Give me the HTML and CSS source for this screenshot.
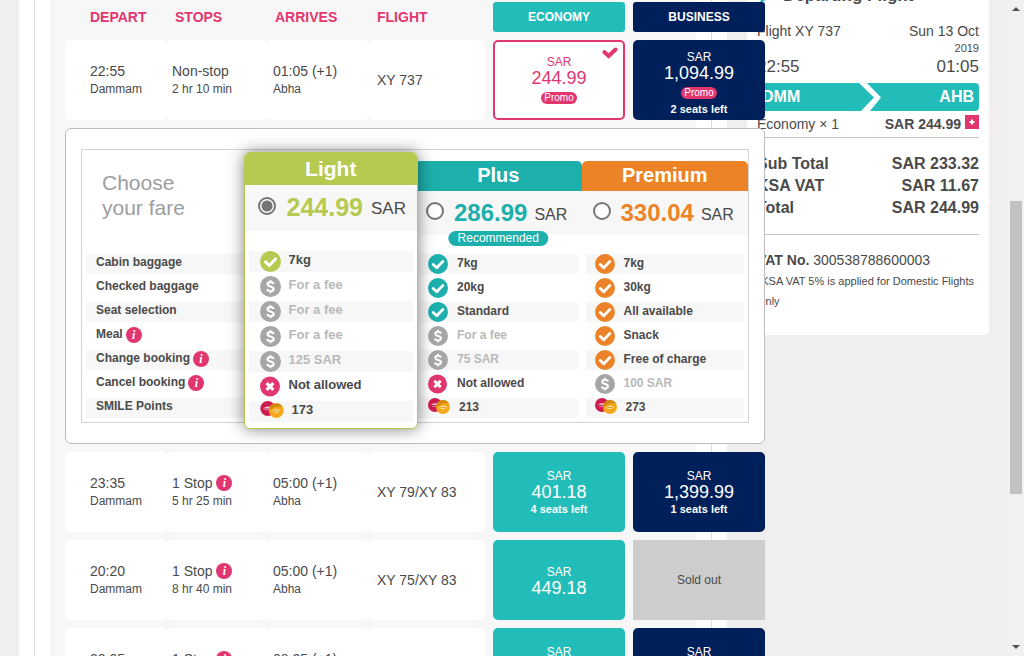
FILE: index.html
```html
<!DOCTYPE html>
<html lang="en">
<head>
<meta charset="utf-8">
<title>Select your flight</title>
<link rel="stylesheet" href="styles.css">
</head>
<body>
<svg class="sprite" aria-hidden="true">
  <symbol id="check" viewBox="0 0 20 20"><circle cx="10" cy="10" r="10" fill="currentColor"/><path d="M5.2 10.4 8.8 13.8 14.9 7.4" fill="none" stroke="#fff" stroke-width="2.8" stroke-linecap="round" stroke-linejoin="round"/></symbol>
  <symbol id="cross" viewBox="0 0 20 20"><circle cx="9.5" cy="10" r="9.5" fill="#e2366f"/><path d="M6.3 6.8 12.7 13.2M12.7 6.8 6.3 13.2" fill="none" stroke="#fff" stroke-width="3"/></symbol>
  <symbol id="fee" viewBox="0 0 20 20"><circle cx="10" cy="10" r="10" fill="#a6a6a6"/><path d="M13 7.600C12.600 6.200 11.400 5.800 10 5.800 8.300 5.800 7.200 6.500 7.200 7.800 7.200 10.500 13 9.500 13 12.300 13 13.700 11.700 14.400 10 14.400 8.400 14.400 7.200 13.800 6.800 12.400" fill="none" stroke="#fff" stroke-width="2"/><path d="M10 3.800V6M10 14V16.400" stroke="#fff" stroke-width="1.600"/></symbol>
  <symbol id="smile" viewBox="0 0 22 16"><circle cx="7" cy="7" r="7" fill="#cf1b50"/><path d="M2.500 7.500Q6 3.500 11 6.500Q7 10.500 2.500 7.500" fill="#f7c9d5"/><path d="M3 7.500Q6 7.800 10 7" stroke="#b0123f" fill="none"/><circle cx="15" cy="9" r="7" fill="#f5a81c"/><path d="M9 5.500A7 7 0 0 1 21 5.500Q14 4 9 9Z" fill="#d08a0c"/><path d="M11 9.500Q15 6.500 19 8.500Q15.500 13 11 9.500" fill="#fff0c8"/><path d="M12 9.700Q15 9.900 18 9" stroke="#e09a10" fill="none"/></symbol>
</svg>

<div class="page">
  <main class="main">
    <div class="frame">
      <div class="results">
        <section class="flights">
          <div class="row row--head">
            <span class="head head--depart">DEPART</span>
            <span class="head head--stops">STOPS</span>
            <span class="head head--arrives">ARRIVES</span>
            <span class="head head--flight">FLIGHT</span>
            <span class="cabin cabin--economy">ECONOMY</span>
            <span class="cabin cabin--business">BUSINESS</span>
          </div>

          <div class="row">
            <div class="cell cell--first"><span>22:55</span><small>Dammam</small></div>
            <div class="cell"><span>Non-stop</span><small>2 hr 10 min</small></div>
            <div class="cell"><span>01:05 (+1)</span><small>Abha</small></div>
            <div class="cell cell--flight"><span>XY 737</span></div>
            <button class="price price--selected" type="button">
              <svg class="price__tick" viewBox="0 0 16 12"><path d="M2.500 5.200 6.700 9 13.500 2.500" fill="none" stroke="currentColor" stroke-width="4" stroke-linecap="round"/></svg>
              <span class="price__cur">SAR</span><span class="price__sum">244.99</span><span class="promo">Promo</span>
            </button>
            <button class="price price--business price--full" type="button"><span class="price__cur">SAR</span><span class="price__sum">1,094.99</span><span class="promo">Promo</span><b class="price__left">2 seats left</b></button>
          </div>

          <div class="fares">
            <div class="fares__box">
              <div class="labels">
                <h2 class="labels__title">Choose<br>your fare</h2>
                <ul class="features">
                  <li>Cabin baggage</li>
                  <li>Checked baggage</li>
                  <li>Seat selection</li>
                  <li>Meal <i class="info">i</i></li>
                  <li>Change booking <i class="info">i</i></li>
                  <li>Cancel booking <i class="info">i</i></li>
                  <li>SMILE Points</li>
                </ul>
              </div>

              <div class="fare fare--light">
                <h3 class="fare__name">Light</h3>
                <label class="fare__price"><input type="radio" name="fare" checked><b>244.99</b><span>SAR</span></label>
                <ul class="features">
                  <li><svg class="ico"><use href="#check"/></svg>7kg</li>
                  <li class="paid"><svg class="ico"><use href="#fee"/></svg>For a fee</li>
                  <li class="paid"><svg class="ico"><use href="#fee"/></svg>For a fee</li>
                  <li class="paid"><svg class="ico"><use href="#fee"/></svg>For a fee</li>
                  <li class="paid"><svg class="ico"><use href="#fee"/></svg>125 SAR</li>
                  <li><svg class="ico"><use href="#cross"/></svg>Not allowed</li>
                  <li><svg class="ico ico--smile"><use href="#smile"/></svg>173</li>
                </ul>
              </div>

              <div class="fare fare--plus">
                <h3 class="fare__name">Plus</h3>
                <label class="fare__price"><input type="radio" name="fare"><b>286.99</b><span>SAR</span></label>
                <span class="recommended">Recommended</span>
                <ul class="features">
                  <li><svg class="ico"><use href="#check"/></svg>7kg</li>
                  <li><svg class="ico"><use href="#check"/></svg>20kg</li>
                  <li><svg class="ico"><use href="#check"/></svg>Standard</li>
                  <li class="paid"><svg class="ico"><use href="#fee"/></svg>For a fee</li>
                  <li class="paid"><svg class="ico"><use href="#fee"/></svg>75 SAR</li>
                  <li><svg class="ico"><use href="#cross"/></svg>Not allowed</li>
                  <li><svg class="ico ico--smile"><use href="#smile"/></svg>213</li>
                </ul>
              </div>

              <div class="fare fare--premium">
                <h3 class="fare__name">Premium</h3>
                <label class="fare__price"><input type="radio" name="fare"><b>330.04</b><span>SAR</span></label>
                <ul class="features">
                  <li><svg class="ico"><use href="#check"/></svg>7kg</li>
                  <li><svg class="ico"><use href="#check"/></svg>30kg</li>
                  <li><svg class="ico"><use href="#check"/></svg>All available</li>
                  <li><svg class="ico"><use href="#check"/></svg>Snack</li>
                  <li><svg class="ico"><use href="#check"/></svg>Free of charge</li>
                  <li class="paid"><svg class="ico"><use href="#fee"/></svg>100 SAR</li>
                  <li><svg class="ico ico--smile"><use href="#smile"/></svg>273</li>
                </ul>
              </div>
            </div>
          </div>

          <div class="row">
            <div class="cell cell--first"><span>23:35</span><small>Dammam</small></div>
            <div class="cell"><span>1 Stop <i class="info">i</i></span><small>5 hr 25 min</small></div>
            <div class="cell"><span>05:00 (+1)</span><small>Abha</small></div>
            <div class="cell cell--flight"><span>XY 79/XY 83</span></div>
            <button class="price" type="button"><span class="price__cur">SAR</span><span class="price__sum">401.18</span><b class="price__left">4 seats left</b></button>
            <button class="price price--business" type="button"><span class="price__cur">SAR</span><span class="price__sum">1,399.99</span><b class="price__left">1 seats left</b></button>
          </div>

          <div class="row">
            <div class="cell cell--first"><span>20:20</span><small>Dammam</small></div>
            <div class="cell"><span>1 Stop <i class="info">i</i></span><small>8 hr 40 min</small></div>
            <div class="cell"><span>05:00 (+1)</span><small>Abha</small></div>
            <div class="cell cell--flight"><span>XY 75/XY 83</span></div>
            <button class="price" type="button"><span class="price__cur">SAR</span><span class="price__sum">449.18</span></button>
            <div class="price price--sold">Sold out</div>
          </div>

          <div class="row">
            <div class="cell cell--first"><span>20:05</span><small>Dammam</small></div>
            <div class="cell"><span>1 Stop <i class="info">i</i></span><small>12 hr 20 min</small></div>
            <div class="cell"><span>08:25 (+1)</span><small>Abha</small></div>
            <div class="cell cell--flight"><span>XY 87/XY 85</span></div>
            <button class="price" type="button"><span class="price__cur">SAR</span><span class="price__sum">449.18</span><b class="price__left">4 seats left</b></button>
            <button class="price price--business" type="button"><span class="price__cur">SAR</span><span class="price__sum">1,399.99</span><b class="price__left">1 seats left</b></button>
          </div>
        </section>
      </div>
    </div>
  </main>

  <aside class="summary">
    <h2 class="summary__title"><svg class="summary__plane" viewBox="0 0 20 20"><path d="M1 8 8 9 14 3 17 3 11 11 5 17 3 16 5 12Z" fill="currentColor"/></svg>Departing Flight</h2>
    <div class="line"><span>Flight XY 737</span><span>Sun 13 Oct</span></div>
    <div class="year">2019</div>
    <div class="line line--times"><span>22:55</span><span>01:05</span></div>
    <div class="route"><span>DMM</span><svg class="route__arrow" viewBox="0 0 24 28"><path d="M0 0H8L22 14.500 11 28H2L15 14.500Z" fill="#fff"/></svg><span>AHB</span></div>
    <div class="line line--fare"><span>Economy × 1</span><span class="line__end"><b>SAR 244.99</b><button class="more" type="button" aria-label="Show fare details"><svg viewBox="0 0 14 14"><path d="M7 4.500V9.500M4.500 7H9.500" stroke="#fff" stroke-width="2"/></svg></button></span></div>
    <div class="totals">
      <div class="line"><span>Sub Total</span><span>SAR 233.32</span></div>
      <div class="line"><span>KSA VAT</span><span>SAR 11.67</span></div>
      <div class="line"><span>Total</span><span>SAR 244.99</span></div>
    </div>
    <p class="vat"><b>VAT No.</b> 300538788600003</p>
    <p class="note">*KSA VAT 5% is applied for Domestic Flights Only</p>
  </aside>

  <div class="scrollbar" aria-hidden="true">
    <svg class="scrollbar__arrow" viewBox="0 0 8 4"><path d="M0 4 4 0 8 4Z" fill="#505050"/></svg>
    <div class="scrollbar__track"><div class="scrollbar__thumb"></div></div>
    <svg class="scrollbar__arrow" viewBox="0 0 8 4"><path d="M0 0 4 4 8 0Z" fill="#505050"/></svg>
  </div>
</div>
</body>
</html>
```

FILE: styles.css
```css
* { box-sizing: border-box; }

body {
  margin: 0;
  height: 100vh;
  overflow: hidden;
  background: #f0eeef;
  color: #4a4a4a;
  font: 14px/18px "Liberation Sans", Arial, sans-serif;
}

button { font: inherit; color: inherit; border: 0; padding: 0; cursor: pointer; }
ul { list-style: none; margin: 0; padding: 0; }
h2, h3, p { margin: 0; }
.sprite { display: none; }

.page {
  display: flex;
  align-items: flex-start;
  height: 100vh;
  padding-left: 19px;
  overflow: hidden;
}

/* flight list */
.main { flex: 1; background: #fff; padding: 0 15px; }
.frame { border: solid #dcdcdc; border-width: 0 1px; padding: 0 15px; }
.results { background: #f7f7f7; padding: 2px 15px 0; }

.flights {
  position: relative;
  z-index: 1;
  margin-right: -84px;
  display: grid;
  gap: 8px;
}

.row {
  display: grid;
  grid-template-columns: 101fr 101fr 102fr 116fr 140fr 140fr;
  min-height: 80px;
}
.row--head { min-height: 30px; align-items: center; }

.head { color: #e2366f; font-weight: bold; }
.head--depart { padding-left: 25px; }
.head--stops { padding-left: 9px; }
.head--arrives { padding-left: 8px; }
.head--flight { padding-left: 8px; }

.cabin {
  margin-left: 8px;
  border-radius: 3px;
  color: #fff;
  font-size: 12px;
  font-weight: bold;
  line-height: 30px;
  text-align: center;
}
.cabin--economy { background: #23bdb9; }
.cabin--business { background: #00205b; }

.cell {
  display: flex;
  flex-direction: column;
  justify-content: center;
  padding-left: 6px;
  border-radius: 5px;
  background: #fff;
}
.cell--first { padding-left: 25px; }
.cell--flight { padding-left: 8px; }
.cell span { display: flex; align-items: center; gap: 4px; }
.cell small { font-size: 12px; }

.info {
  display: inline-block;
  width: 16px;
  height: 16px;
  border-radius: 50%;
  background: #e2366f;
  color: #fff;
  font: italic bold 12px/16px "Liberation Serif", serif;
  text-align: center;
}

.price {
  position: relative;
  display: flex;
  flex-direction: column;
  align-items: center;
  justify-content: center;
  margin-left: 8px;
  border-radius: 5px;
  background: #23bdb9;
  color: #fff;
}
.price--business { background: #00205b; }
.price--full { padding-top: 6px; }
.price--selected { background: #fff; border: 2px solid #e2366f; color: #e2366f; }
.price--sold { background: #cdcdcd; color: #4a4a4a; border-radius: 0; font-size: 12px; }
.price__cur { font-size: 12px; line-height: 16px; }
.price__sum { font-size: 18px; line-height: 17px; }
.price__left { font-size: 11px; line-height: 16px; }
.price__tick { position: absolute; top: 5px; right: 5px; width: 16px; height: 12px; }

.promo {
  margin: 5px 0 2px;
  padding: 0 3px;
  border-radius: 6px;
  background: #e2366f;
  color: #fff;
  font-size: 10px;
  line-height: 12px;
}

/* fare chooser */
.fares {
  padding: 20px 15px;
  border: 1px solid #bdbdbd;
  border-radius: 6px;
  background: #fff;
}
.fares__box {
  display: grid;
  grid-template-columns: repeat(4, 1fr);
  border: 1px solid #d2d2d2;
}

.labels__title {
  height: 104px;
  padding: 20px 20px 0;
  color: #9d9d9d;
  font-size: 21px;
  font-weight: normal;
  line-height: 25px;
}

.features { display: grid; gap: 4px; padding: 0 4px 4px; font-size: 12px; font-weight: bold; }
.features li { display: flex; align-items: flex-start; height: 20px; line-height: 18px; }
.features li:nth-child(odd) { background: #f7f7f7; }
.labels .features { padding-right: 0; }
.labels .features li { align-items: center; gap: 3px; padding: 0 0 4px 10px; }
.labels .info { margin-top: 2px; }
.paid { color: #b9b9b9; }

.fare { padding-top: 11px; }
.fare .features li { gap: 9px; padding-left: 9px; }
.ico { flex: none; width: 20px; height: 20px; }
.ico--smile { width: 22px; height: 16px; }

.fare__name {
  border-radius: 5px 5px 0 0;
  background: var(--tone);
  color: #fff;
  font-size: 20px;
  line-height: 29px;
  height: 30px;
  text-align: center;
}
.fare__price {
  display: flex;
  align-items: center;
  height: 44px;
  padding-left: 11px;
  background: #f7f7f7;
  font-size: 16px;
}
.fare__price b { color: var(--tone); font-size: 24px; margin: 0 7px 0 10px; }
.fare__price span { padding-top: 4px; }
.fare__price input {
  appearance: none;
  width: 18px;
  height: 18px;
  margin: 0 0 4px;
  border: 2px solid #757575;
  border-radius: 50%;
  background: #fff;
}
.fare__price input:checked { background: radial-gradient(circle, #757575 5px, #fff 6px); }
.fare .features { margin-top: 19px; }
.fare .ico { color: var(--tone); }

.fare--plus { --tone: #1dafac; position: relative; }
.fare--premium { --tone: #ec8427; }
.fare--light {
  --tone: #b6ca51;
  position: relative;
  z-index: 2;
  margin: 2px -3px -7px -5px;
  padding: 0;
  border: 1px solid var(--tone);
  border-radius: 6px;
  background: #fff;
  box-shadow: 0 0 16px rgba(0, 0, 0, .5);
}
.fare--light .fare__name { height: 32px; font-size: 21px; line-height: 32px; }
.fare--light .fare__price { height: 46px; padding: 0 0 2px 13px; font-size: 17px; }
.fare--light .fare__price b { font-size: 25px; margin: 0 8px 0 11px; }
.fare--light .fare__price input { margin-bottom: 2px; }
.fare--light .features { margin-top: 20px; font-size: 13px; }
.fare--light .features li { height: 21px; padding-left: 11px; gap: 8px; }
.fare--light .ico { width: 21px; height: 21px; }
.fare--light .ico--smile { width: 24px; height: 17px; }

.recommended {
  position: absolute;
  top: 81px;
  left: 50%;
  transform: translateX(-50%);
  padding: 0 9px;
  border-radius: 8px;
  background: var(--tone);
  color: #fff;
  font-size: 12px;
  line-height: 15px;
}

/* booking summary */
.summary {
  flex: 0 0 242px;
  margin: 0 19px 0 20px;
  padding: 0 10px 24px;
  border-radius: 0 0 4px 4px;
  background: #fff;
  line-height: 20px;
}
.summary__title { display: flex; gap: 6px; margin-top: -14px; padding-bottom: 15px; font-size: 17px; line-height: 20px; }
.summary__plane { width: 20px; height: 20px; color: #23bdb9; }
.line { display: flex; justify-content: space-between; }
.line__end { display: flex; align-items: center; gap: 4px; }
.year { font-size: 11px; line-height: 14px; text-align: right; }
.line--times { font-size: 17px; line-height: 24px; }
.route {
  display: flex;
  align-items: center;
  margin: 4px 0 3px;
  height: 28px;
  padding: 0 5px;
  border-radius: 4px;
  background: #23bdb9;
  color: #fff;
  font-size: 16px;
  font-weight: bold;
}
.route__arrow { width: 24px; height: 28px; margin: 0 auto 0 59px; }
.line--fare { padding-bottom: 3px; border-bottom: 1px solid #c4c4c4; }
.more { width: 14px; height: 14px; margin-bottom: 4px; background: #e2366f; }
.more svg { display: block; }
.totals { padding: 15px 0; border-bottom: 1px solid #c4c4c4; font-size: 16px; font-weight: bold; line-height: 22px; }
.vat { margin-top: 15px; }
.note { font-size: 11px; margin-top: 1px; }

/* window scrollbar */
.scrollbar {
  display: flex;
  flex-direction: column;
  align-items: center;
  flex: 0 0 16px;
  height: 100%;
  padding: 7px 0;
  background: #f1f1f1;
}
.scrollbar__arrow { width: 8px; height: 4px; }
.scrollbar__track {
  display: grid;
  grid-template-rows: 190fr 293fr 151fr;
  flex: 1;
  width: 12px;
}
.scrollbar__thumb { grid-row: 2; background: #c1c1c1; }
```
